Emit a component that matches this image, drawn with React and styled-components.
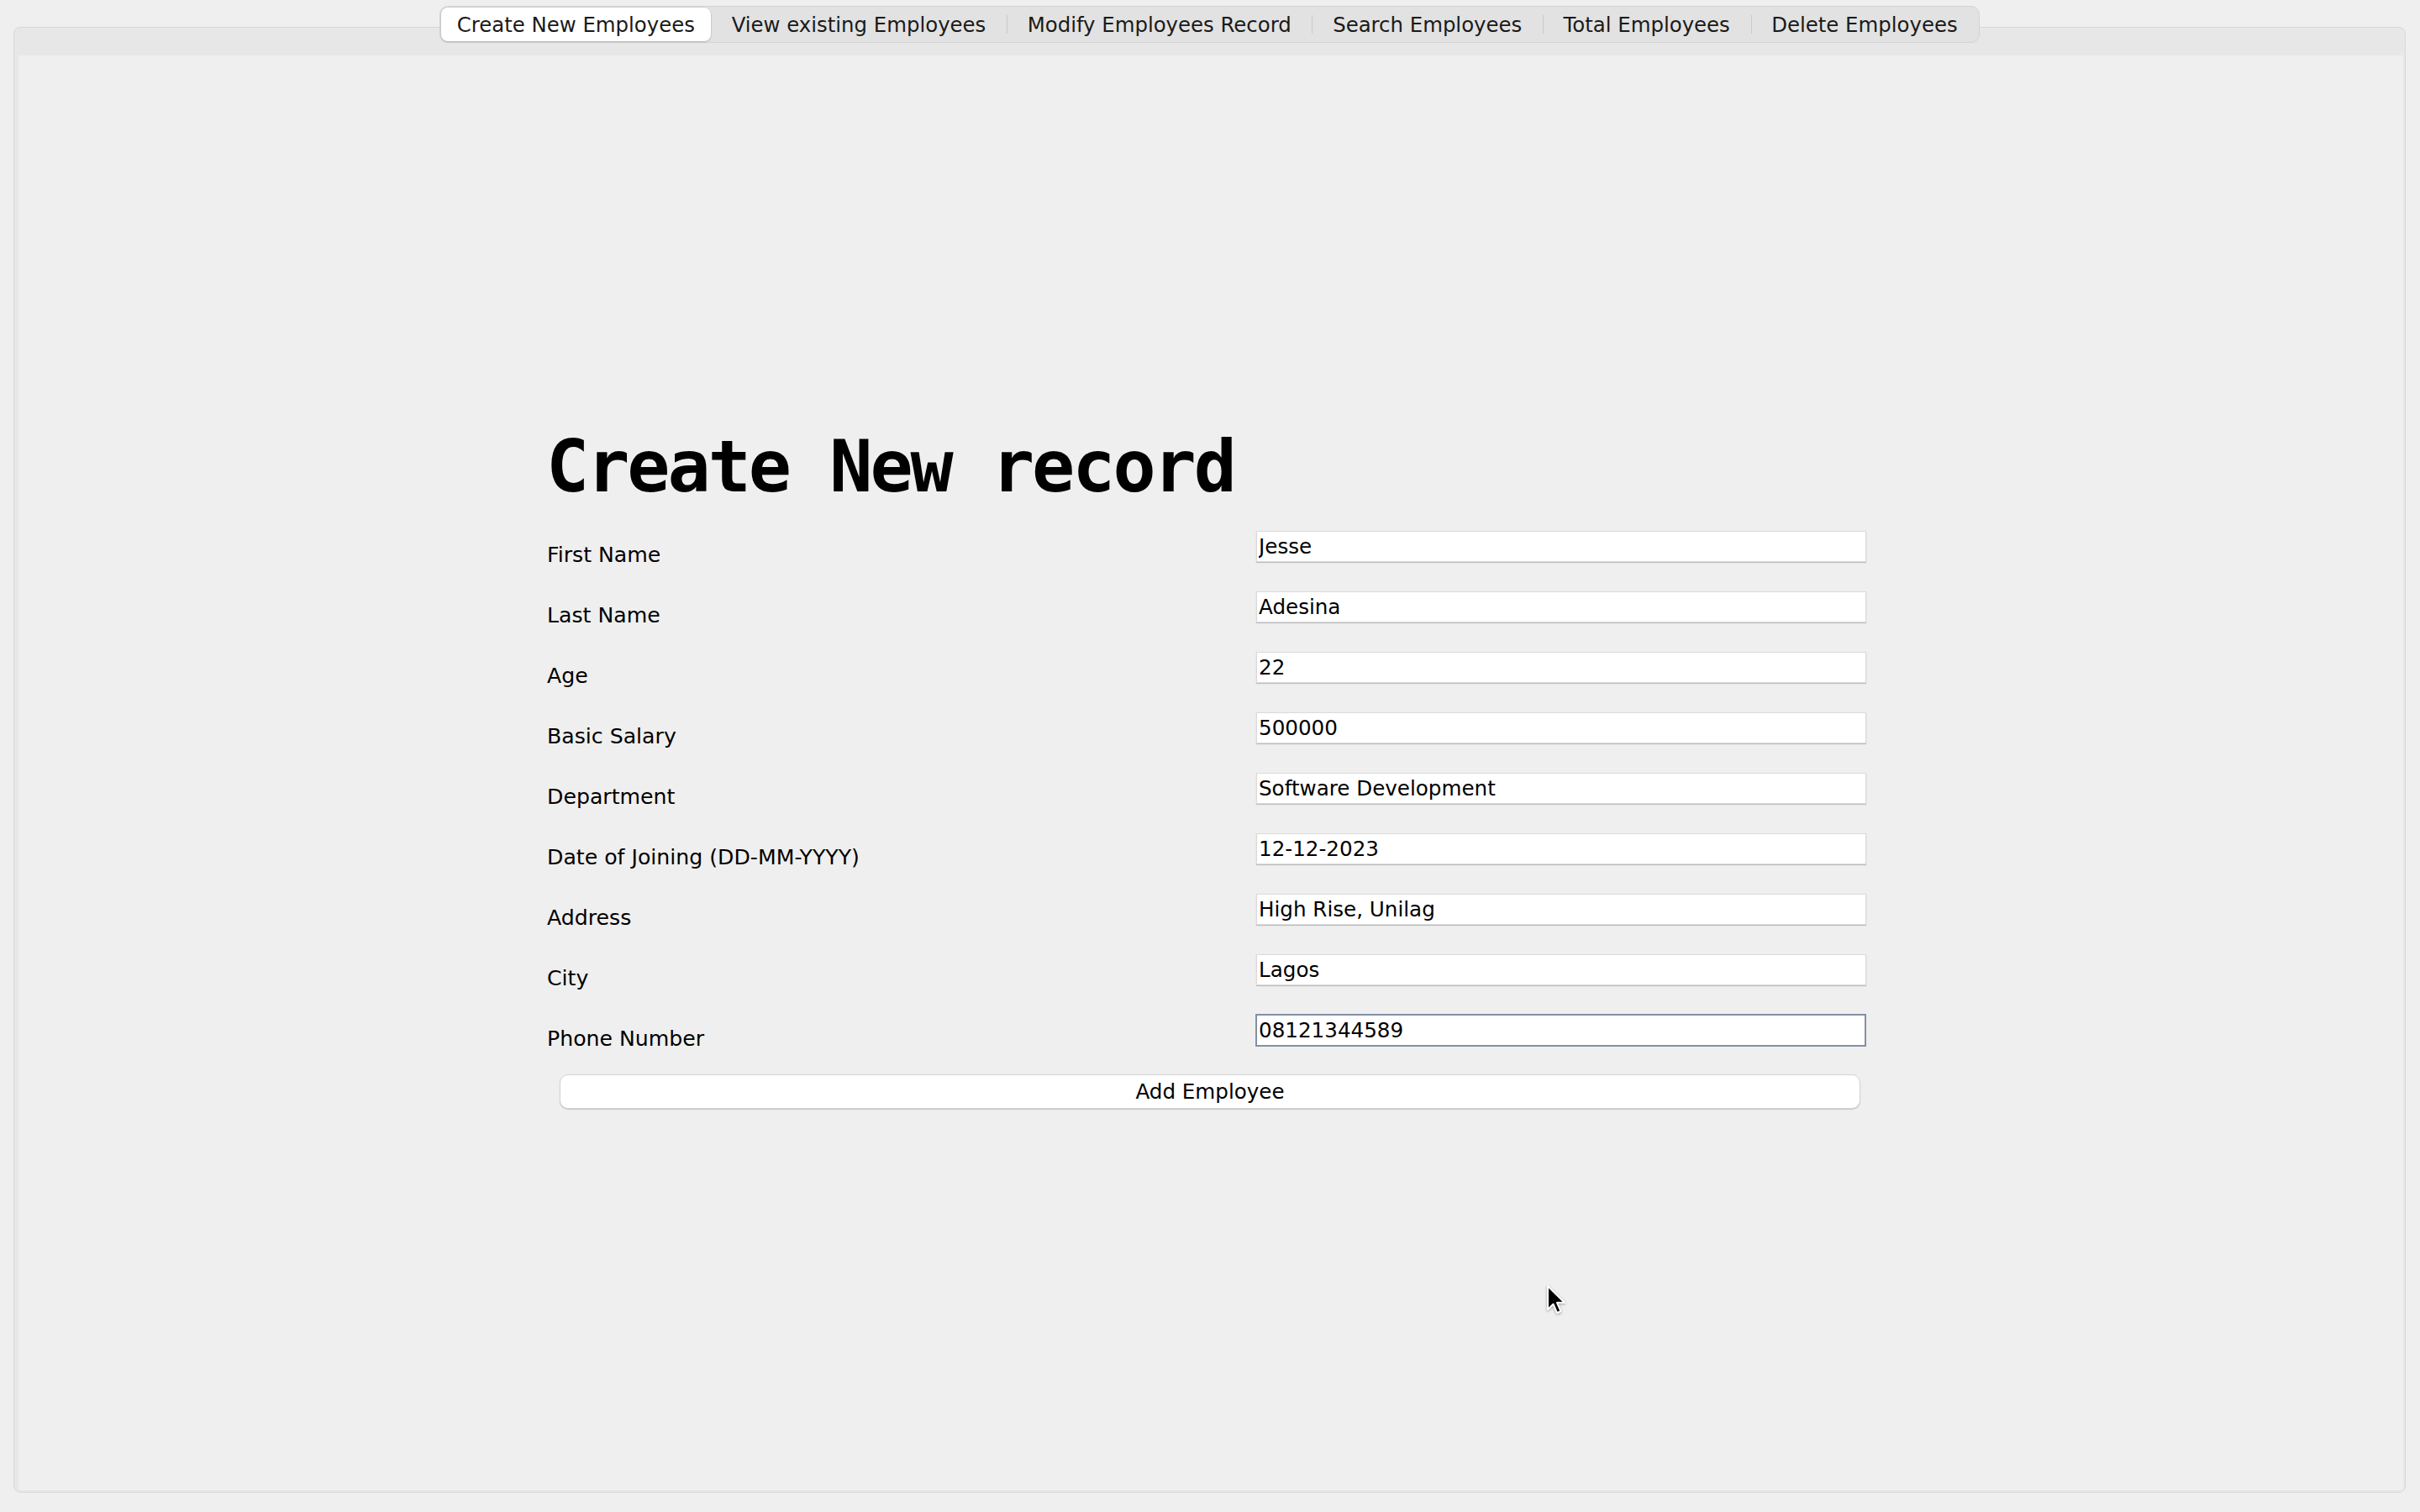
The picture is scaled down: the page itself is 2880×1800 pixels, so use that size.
import React from 'react';
import styled, { createGlobalStyle } from 'styled-components';

const GlobalStyle = createGlobalStyle`
  * {
    box-sizing: border-box;
  }
  html, body {
    margin: 0;
    padding: 0;
    background: #efefef;
  }
  body {
    font-family: "DejaVu Sans", "Liberation Sans", sans-serif;
    color: #000;
  }
`;

const tabs = [
  'Create New Employees',
  'View existing Employees',
  'Modify Employees Record',
  'Search Employees',
  'Total Employees',
  'Delete Employees',
];

const fields = [
  ['First Name', 'Jesse'],
  ['Last Name', 'Adesina'],
  ['Age', '22'],
  ['Basic Salary', '500000'],
  ['Department', 'Software Development'],
  ['Date of Joining (DD-MM-YYYY)', '12-12-2023'],
  ['Address', 'High Rise, Unilag'],
  ['City', 'Lagos'],
  ['Phone Number', '08121344589'],
];

const Frame = styled.div`
  position: relative;
  display: flex;
  flex-direction: column;
  height: 100vh;
  padding: 7px 17px 23px 16px;
`;

const TabBar = styled.div`
  position: relative;
  z-index: 1;
  align-self: center;
  display: flex;
  align-items: center;
  height: 44px;
  padding: 1px;
  margin-bottom: -19px;
  background: #e2e2e2;
  border: 1px solid #d3d3d3;
  border-radius: 10px;
`;

const Tab = styled.div`
  position: relative;
  display: flex;
  align-items: center;
  height: 40px;
  padding: 0 ${p => (p.$active ? 19 : 24.7)}px;
  font-size: 24.4px;
  color: #1a1a1a;
  white-space: nowrap;
  background: ${p => (p.$active ? '#fff' : 'transparent')};
  border-radius: 8px;
  box-shadow: ${p => (p.$active ? '0 0 0 0.5px #c4c4c4, 0 1px 2px rgba(0,0,0,0.22)' : 'none')};

  &::before {
    content: '';
    display: ${p => (p.$divider ? 'block' : 'none')};
    position: absolute;
    left: 0;
    top: 9px;
    bottom: 9px;
    width: 1px;
    background: #cacaca;
  }
`;

const Panel = styled.div`
  flex: 1;
  display: flex;
  padding: 33px 2px 2px 5px;
  background: #e7e7e7;
  border: 1px solid #d8d8d8;
  border-radius: 8px;
`;

const Content = styled.div`
  flex: 1;
  padding: 447px 0 0 629px;
  background: #efefef;
`;

const Form = styled.form`
  display: flex;
  flex-direction: column;
  width: 1570px;
  margin: 0;
`;

const Heading = styled.h1`
  margin: 0 0 34px -1px;
  font-family: "DejaVu Sans Mono", "Liberation Mono", monospace;
  font-weight: bold;
  font-size: 85px;
  line-height: 85px;
  letter-spacing: -3px;
  color: #000;
`;

const Row = styled.div`
  display: grid;
  grid-template-columns: 844px 726px;
  align-items: start;
  height: 72px;
`;

const Label = styled.label`
  padding-top: 10px;
  font-size: 25.2px;
  line-height: 37px;
  color: #000;
`;

const Field = styled.input`
  margin: ${p => (p.$focused ? '-1px 0 0 -1px' : '0')};
  width: ${p => (p.$focused ? 727 : 726)}px;
  height: ${p => (p.$focused ? 39 : 37)}px;
  padding: 0 2px;
  font-family: "DejaVu Sans", "Liberation Sans", sans-serif;
  font-size: 24.6px;
  color: #000;
  background: #fff;
  border: ${p => (p.$focused ? '2px solid #8290a5' : '1px solid #dadada')};
  box-shadow: ${p => (p.$focused ? 'none' : '0 1px 1px rgba(0,0,0,0.2)')};
  border-radius: 0;
  outline: none;
`;

const AddButton = styled.button`
  height: 41px;
  margin: -1px 7px 0 15px;
  font-family: "DejaVu Sans", "Liberation Sans", sans-serif;
  font-size: 24.6px;
  color: #000;
  background: #fff;
  border: 1px solid #d3d3d3;
  border-radius: 10px;
  box-shadow: 0 1px 1px rgba(0,0,0,0.18);
`;

const Cursor = styled.svg`
  position: absolute;
  left: 1839px;
  top: 1528px;
  filter: drop-shadow(0 1px 1.5px rgba(0,0,0,0.35));
`;

export default function App() {
  return (
    <>
      <GlobalStyle />
      <Frame>
        <TabBar>
          {tabs.map((t, i) => (
            <Tab key={t} $active={i === 0} $divider={i > 1}>
              {t}
            </Tab>
          ))}
        </TabBar>
        <Panel>
          <Content>
            <Form onSubmit={e => e.preventDefault()}>
              <Heading>Create New record</Heading>
              {fields.map(([label, value], i) => (
                <Row key={label}>
                  <Label>{label}</Label>
                  <Field defaultValue={value} $focused={i === fields.length - 1} />
                </Row>
              ))}
              <AddButton type="button">Add Employee</AddButton>
            </Form>
          </Content>
        </Panel>
        <Cursor width="26" height="38" viewBox="0 0 26 38">
          <path
            d="M3 3 L3 31 L9.5 24.5 L14 35 L18.5 33 L14 22.8 L23 22.8 Z"
            fill="#000"
            stroke="#fff"
            strokeWidth="2"
            strokeLinejoin="round"
          />
        </Cursor>
      </Frame>
    </>
  );
}
